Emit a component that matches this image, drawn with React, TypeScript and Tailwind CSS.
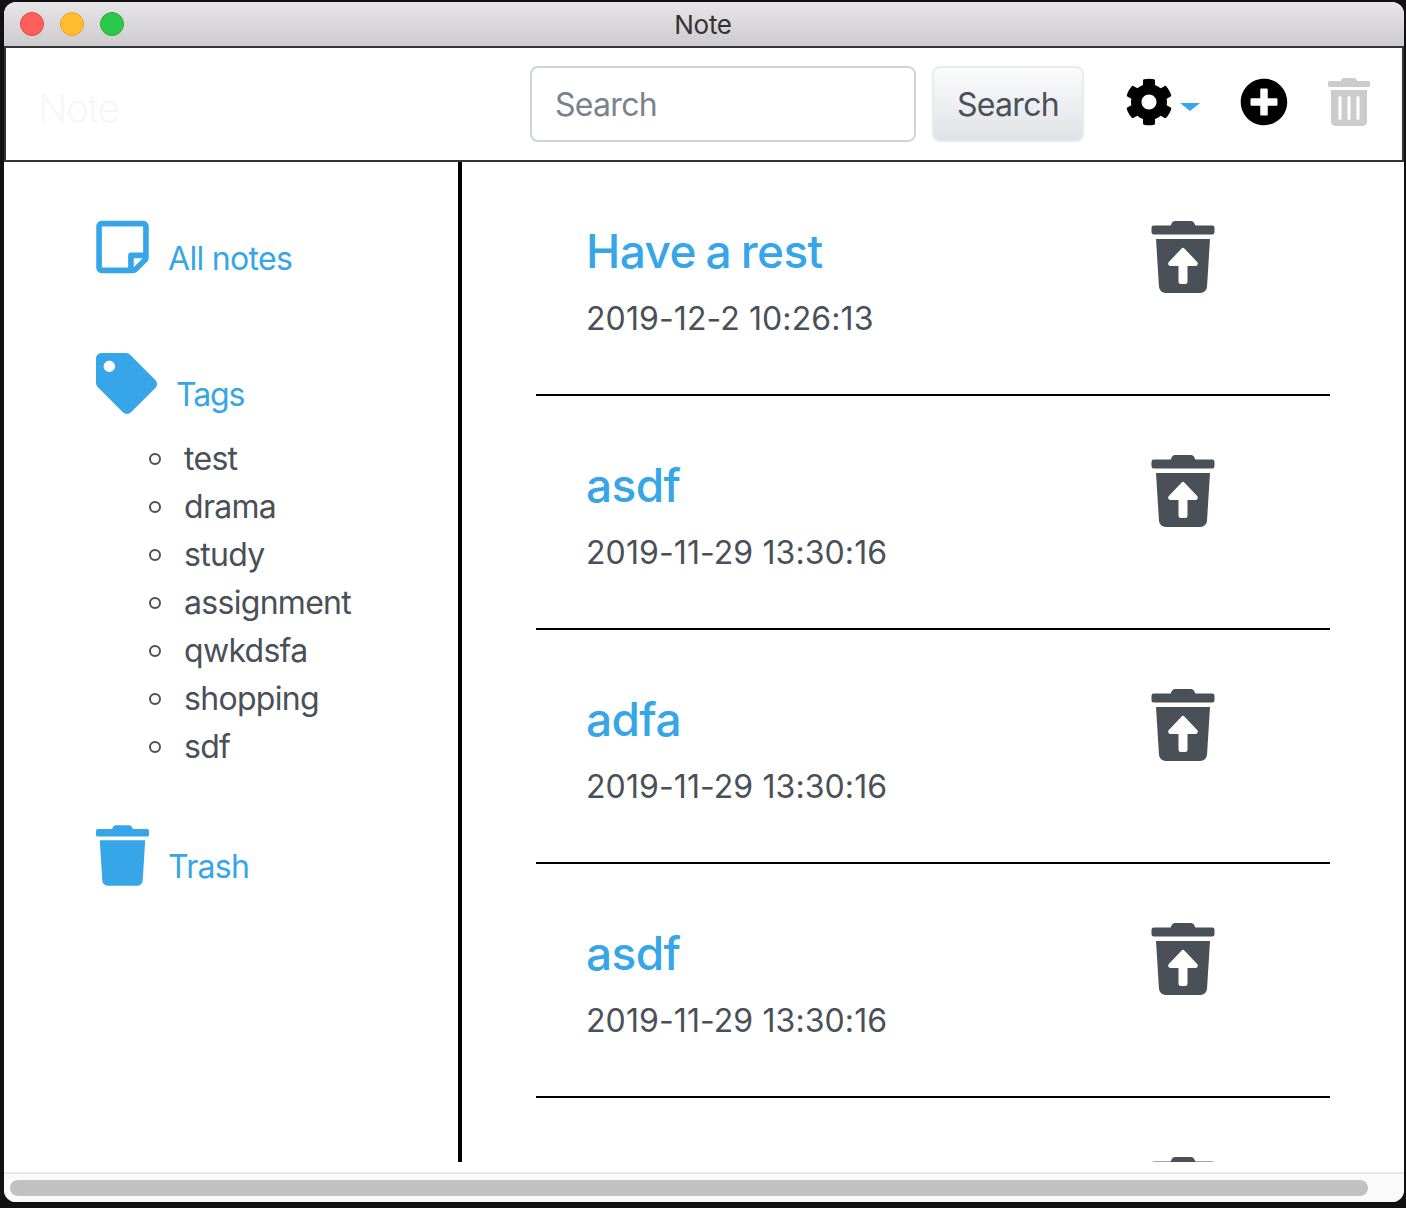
import { FaCog, FaPlusCircle, FaRegStickyNote, FaTag, FaTrash, FaTrashAlt, FaTrashRestore } from "react-icons/fa";

const TAGS = ["test", "drama", "study", "assignment", "qwkdsfa", "shopping", "sdf"];

const NOTES = [
  { title: "Have a rest", date: "2019-12-2 10:26:13" },
  { title: "asdf", date: "2019-11-29 13:30:16" },
  { title: "adfa", date: "2019-11-29 13:30:16" },
  { title: "asdf", date: "2019-11-29 13:30:16" },
];

function TitleBar() {
  return (
    <div className="relative flex h-[44px] items-center gap-4 rounded-t-[12px] bg-gradient-to-b from-[#e7e5e8] to-[#cdcbce] pl-4">
      <span className="h-6 w-6 rounded-full border border-[#e5484a] bg-[#ff5f57]" />
      <span className="h-6 w-6 rounded-full border border-[#e5a32a] bg-[#ffbd2e]" />
      <span className="h-6 w-6 rounded-full border border-[#22ad37] bg-[#2bc84a]" />
      <span className="absolute inset-x-0 top-[7px] pr-[2px] text-center text-[26px] leading-8 tracking-[-0.3px] text-[#333]">Note</span>
    </div>
  );
}

function NavBar() {
  return (
    <div className="flex h-[116px] items-center border-2 border-[#30353a] pl-[32px]">
      <span className="mt-[8px] w-[492px] text-[38px] font-extralight leading-none tracking-[-0.5px] text-[#f4f5f6]">Note</span>
      <input
        placeholder="Search"
        className="h-[76px] w-[386px] rounded-lg border-2 border-[#ced4da] px-[23px] text-[32px] tracking-[-0.7px] text-[#495057] outline-none placeholder:text-[#7a838b]"
      />
      <button className="ml-4 h-[76px] w-[152px] rounded-lg border-2 border-[#e9ecef] bg-gradient-to-b from-[#fcfcfd] to-[#dfe2e6] pt-[2px] text-[32px] tracking-[-0.7px] text-[#495057]">
        Search
      </button>
      <FaCog className="mb-[4px] ml-[41px] h-12 w-12 text-black" />
      <span className="mb-[-6px] ml-[7px] h-0 w-0 border-x-[10px] border-t-[8px] border-x-transparent border-t-[#36a7e9]" />
      <FaPlusCircle className="mb-[4px] ml-[40px] h-12 w-12 text-black" />
      <FaTrashAlt className="mb-[4px] ml-[40px] h-12 w-[42px] text-[#cccccc]" />
    </div>
  );
}

function SideBar() {
  return (
    <div className="w-[458px] shrink-0 border-r-4 border-black pl-[92px] pt-[55px] text-[32px] leading-[48px] tracking-[-0.7px] text-[#36a6e8]">
      <div className="flex items-start">
        <FaRegStickyNote className="h-[60px] w-[53px]" />
        <span className="ml-[19px] mt-[18px]">All notes</span>
      </div>
      <div className="mt-[70px] flex items-start">
        <FaTag className="h-[61px] w-[61px]" />
        <span className="ml-[19px] mt-[18px] tracking-[-1.1px]">Tags</span>
      </div>
      <ul className="mt-[16px] pl-[53px] text-[#495057]">
        {TAGS.map((tag) => (
          <li key={tag} className="flex items-center">
            <span className="mr-[23px] h-3 w-3 rounded-full border-[2.5px] border-[#495057]" />
            {tag}
          </li>
        ))}
      </ul>
      <div className="mt-[54px] flex items-start">
        <FaTrash className="h-[61px] w-[53px]" />
        <span className="ml-[19px] mt-[18px]">Trash</span>
      </div>
    </div>
  );
}

function NoteRow({ title, date }: { title?: string; date?: string }) {
  return (
    <div className="flex h-[234px] shrink-0 items-start border-b-2 border-black">
      {title && (
        <div className="pl-[50px] pt-[59px]">
          <h2 className="text-[46px] font-medium leading-[60px] tracking-[-0.6px] text-[#36a6e8] [word-spacing:-2px]">{title}</h2>
          <p className="mt-[14px] text-[32px] leading-[48px] tracking-[0.1px] text-[#495057]">{date}</p>
        </div>
      )}
      <FaTrashRestore className="ml-auto mr-[115px] mt-[59px] h-[72px] w-[64px] text-[#495057]" />
    </div>
  );
}

export default function App() {
  return (
    <div className="h-[1208px] overflow-hidden bg-[#111] pl-1 pr-[2px] pt-[2px] font-['Inter',sans-serif]">
      <div className="flex h-[1200px] flex-col overflow-hidden rounded-[12px] bg-white">
        <TitleBar />
        <NavBar />
        <div className="flex h-[1000px] shrink-0 overflow-hidden">
          <SideBar />
          <div className="flex flex-1 flex-col overflow-hidden px-[74px]">
            {NOTES.map((n, i) => (
              <NoteRow key={i} title={n.title} date={n.date} />
            ))}
            {/* next row is scrolled out of view, only the icon top shows */}
            <NoteRow />
          </div>
        </div>
        <div className="mt-[10px] flex-1 border-t-2 border-[#e8e8e8] bg-[#fafafa] pl-[6px] pt-[6px]">
          <div className="h-4 w-[1358px] rounded-full bg-[#c1c1c1]" />
        </div>
      </div>
    </div>
  );
}
